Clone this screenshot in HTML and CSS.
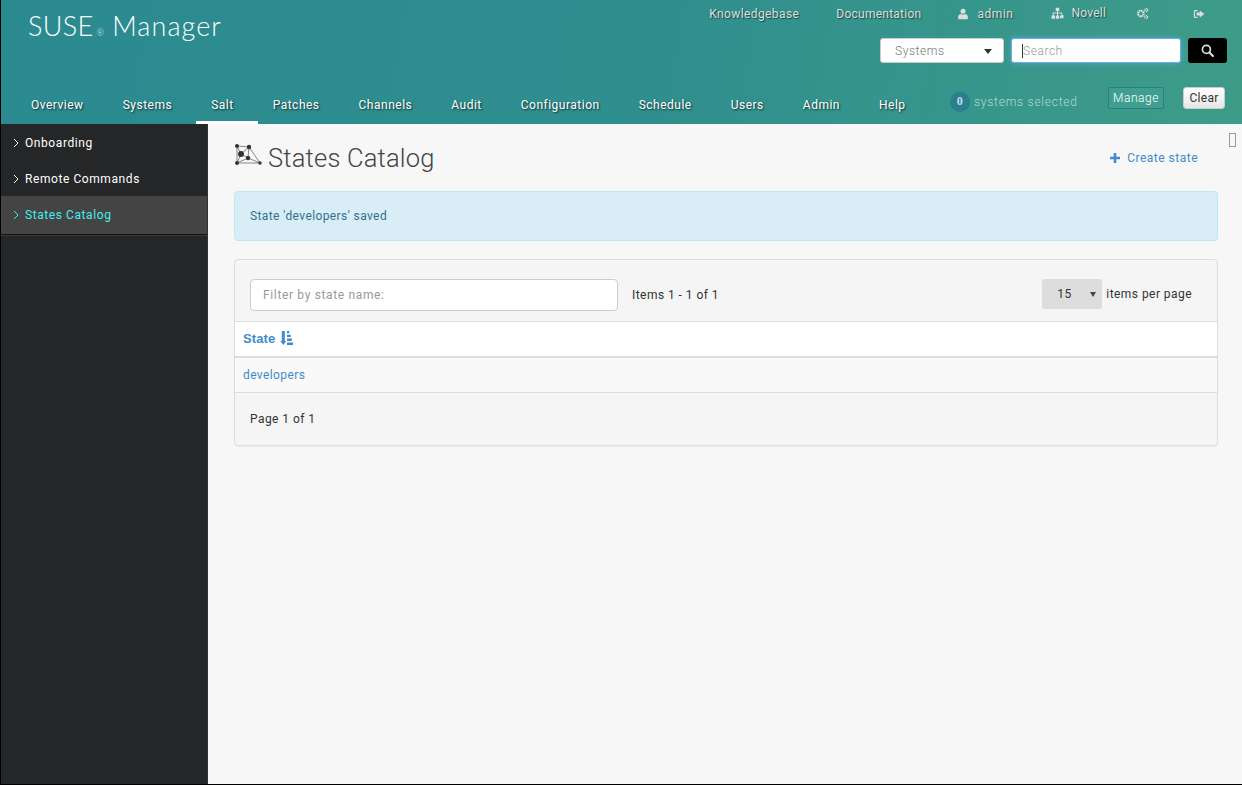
FILE: index.html
```html
<!DOCTYPE html>
<html lang="en">
<head>
<meta charset="utf-8">
<title>States Catalog - SUSE Manager</title>
<link rel="stylesheet" href="styles.css">
</head>
<body>
<div class="app">
  <header class="header">
    <div class="header-top">
      <div class="brand">SUSE<span class="reg">®</span><span class="brand-name">Manager</span></div>
      <div class="tools">
        <ul class="util">
          <li class="u-kb">Knowledgebase</li>
          <li class="u-doc">Documentation</li>
          <li class="u-admin"><svg class="ico" viewBox="0 0 12 12"><circle cx="6" cy="3.2" r="2.5"/><path d="M1.2 11.2V8.6C1.2 7 2.8 6.3 4 6.1c1.2.8 2.8.8 4 0 1.200.2 2.800.9 2.800 2.500v2.600z"/></svg>admin</li>
          <li class="u-org"><svg class="ico ico-org" viewBox="0 0 13 12"><path d="M4.700 0.800h3.600v3.200H7v1.500h4.200v2.500h1.300v3.200H9V8.500h1.300V6.500H7v2h1.200v3.200H4.800V8.500H6v-2H2.700v2H4v3.200H.5V8.500h1.200V5.500H6V4H4.700z"/></svg>Novell</li>
          <li class="u-cog"><svg class="ico ico-cog" viewBox="0 0 14 14"><circle cx="5.200" cy="7" r="3" fill="none" stroke-width="2.400" stroke-dasharray="1.700 .6"/><circle cx="11" cy="3.200" r="1.500" fill="none" stroke-width="1.500" stroke-dasharray="1 .5"/><circle cx="11" cy="10.800" r="1.500" fill="none" stroke-width="1.500" stroke-dasharray="1 .5"/></svg></li>
          <li class="u-out"><svg class="ico" viewBox="0 0 12 12"><path d="M4.500 2H2.200C1.300 2 .8 2.600.8 3.400v5.200c0 .8.5 1.400 1.400 1.400h2.300V8.800H2.400c-.2 0-.4-.2-.4-.4V3.600c0-.2.2-.4.400-.4h2.100z"/><path d="M6.800 2.400 11.400 6 6.800 9.600V7.600H3.600V4.400h3.200z"/></svg></li>
        </ul>
        <div class="search">
          <div class="select"><span>Systems</span><i class="caret"></i></div>
          <div class="search-input"><i class="cursor"></i><span>Search</span></div>
          <div class="search-btn"><svg viewBox="0 0 12 12"><circle cx="5" cy="5" r="3.700" fill="none" stroke="#ddd" stroke-width="1.600"/><path d="M7.800 7.800 11 11" stroke="#ddd" stroke-width="2" stroke-linecap="round"/></svg></div>
        </div>
      </div>
    </div>
    <div class="header-bottom">
      <nav>
        <ul class="mainnav">
          <li>Overview</li>
          <li>Systems</li>
          <li class="active">Salt</li>
          <li>Patches</li>
          <li>Channels</li>
          <li>Audit</li>
          <li>Configuration</li>
          <li>Schedule</li>
          <li>Users</li>
          <li>Admin</li>
          <li>Help</li>
        </ul>
      </nav>
      <div class="ssm">
        <span class="badge">0</span>
        <span class="ssm-text">systems selected</span>
        <span class="btn-manage">Manage</span>
        <span class="btn-clear">Clear</span>
      </div>
    </div>
  </header>
  <div class="body">
    <aside class="sidebar">
      <ul class="sidenav">
        <li><svg class="chev" viewBox="0 0 6 10"><path d="M1 1l4 4-4 4"/></svg>Onboarding</li>
        <li><svg class="chev" viewBox="0 0 6 10"><path d="M1 1l4 4-4 4"/></svg>Remote Commands</li>
        <li class="current"><svg class="chev" viewBox="0 0 6 10"><path d="M1 1l4 4-4 4"/></svg>States Catalog</li>
      </ul>
    </aside>
    <main class="main">
      <i class="missing-glyph"></i>
      <div class="page-head">
        <h1><svg class="net" viewBox="0 0 28 24">
          <path d="M3 3 L15 4 L26 20 L3 20 Z M3 3 L7 11 L3 20 M7 11 L15 4 M7 11 L14 15 L26 20 M15 4 L14 15 M14 15 L3 20" fill="none" stroke="#555" stroke-width=".7"/>
          <circle cx="3" cy="3" r="2"/><circle cx="15" cy="4" r="2.200"/><circle cx="7" cy="11" r="3"/><circle cx="14" cy="15" r="2.200"/><circle cx="3" cy="20" r="2"/><circle cx="26" cy="20" r="1.700"/>
        </svg>States Catalog</h1>
        <a class="create"><svg viewBox="0 0 10 10"><path d="M3.700 0h2.600v3.700H10v2.600H6.300V10H3.700V6.300H0V3.700h3.700z"/></svg>Create state</a>
      </div>
      <div class="alert">State 'developers' saved</div>
      <section class="panel">
        <div class="panel-top">
          <div class="filter">Filter by state name:</div>
          <div class="items">Items 1 - 1 of 1</div>
          <div class="perpage">
            <div class="pp-select"><span>15</span><i></i></div>
            <span>items per page</span>
          </div>
        </div>
        <div class="th"><span>State</span><svg viewBox="0 0 13 14"><path d="M1.800 0h3v10h1.500L3.300 14 .3 10h1.500z"/><path d="M7 0h2.200v2.300H7zM7 3.800h3.700v2.300H7zM7 7.600h4.800v2.400H7zM7 11.500h6V14H7z"/></svg></div>
        <div class="td">developers</div>
        <div class="panel-foot">Page 1 of 1</div>
      </section>
    </main>
  </div>
</div>
</body>
</html>
```

FILE: styles.css
```css
* { box-sizing: border-box; }
html, body { margin: 0; height: 100%; }
body {
  font-family: Roboto, "Liberation Sans", sans-serif;
  font-size: 12px;
  font-weight: 300;
  letter-spacing: .55px;
  color: #333;
  background: #000;
  overflow: hidden;
}
ul { list-style: none; margin: 0; padding: 0; }
.app {
  height: 784px;
  margin-left: 1px;
  display: flex;
  flex-direction: column;
}
.header {
  height: 124px;
  flex: none;
  background: linear-gradient(100deg, #2b8a90 0%, #2f8e8e 50%, #3d9c88 100%);
  display: flex;
  flex-direction: column;
  color: #fff;
}
.header-top {
  display: flex;
  justify-content: space-between;
  height: 88px;
}
.brand {
  font-family: Lato, sans-serif;
  font-weight: 300;
  font-size: 27px;
  letter-spacing: .3px;
  padding: 9px 0 0 27px;
  line-height: 34px;
}
.reg { font-size: 9px; margin: 0 8px 0 3px; opacity: .8; }
.brand-name { font-size: 27px; letter-spacing: 1.050px; }
.tools { display: flex; flex-direction: column; align-items: flex-end; }
.util {
  display: flex;
  height: 38px;
  padding-top: 7px;
  line-height: 14px;
  color: #ddd;
  font-weight: 400;
  text-shadow: 1px 1px 1px rgba(0,0,0,.5);
}
.u-kb { margin-right: 37px; letter-spacing: .4px; }
.u-doc { margin-right: 36px; letter-spacing: .25px; }
.u-admin { margin-right: 37px; }
.u-org { margin-right: 30px; margin-top: -1px; letter-spacing: .2px; }
.u-cog { margin-right: 44px; }
.u-out { margin-right: 37px; }
.ico { width: 12px; height: 12px; fill: #ddd; vertical-align: -2px; margin-right: 8px; }
.ico-org { width: 13px; margin-right: 8px; }
.ico-cog { width: 13px; height: 13px; margin: 0; fill: none; stroke: #ddd; }
.u-out .ico { margin: 0; }
.search { display: flex; padding-right: 15px; height: 26px; }
.select {
  width: 124px; height: 25px;
  background: #fff;
  border: 1px solid #ccc;
  border-radius: 3px;
  display: flex; align-items: center; justify-content: space-between;
  padding: 0 11px 0 14px;
  color: #777;
  margin-right: 7px;
}
.caret { width: 0; height: 0; border: 4.500px solid transparent; border-top: 5px solid #333; border-bottom: 0; margin-top: 1px; }
.search-input {
  width: 170px; height: 25px;
  background: #fff;
  border: 1px solid #66afe9;
  border-radius: 3px;
  box-shadow: 0 0 6px rgba(102,175,233,.6);
  display: flex; align-items: center;
  padding-left: 10px;
  color: #999;
  margin-right: 7px;
}
.cursor { width: 1px; height: 14px; background: #333; }
.search-btn {
  width: 39px; height: 25px;
  background: #000;
  border-radius: 3px;
  display: flex; align-items: center; justify-content: center;
}
.search-btn svg { width: 13px; height: 13px; }
.header-bottom { display: flex; flex: 1; }
.mainnav { display: flex; padding-left: 15px; height: 36px; }
.mainnav li {
  padding: 9px 24px 0 15px;
  line-height: 16px;
  color: #fff;
  text-shadow: 1px 1px 2px rgba(0,0,0,.7);
  letter-spacing: .5px;
  font-weight: 400;
}
.mainnav li.active { border-bottom: 3px solid #fff; height: 36px; }
.ssm { display: flex; align-items: flex-start; position: absolute; left: 950px; }
.badge {
  width: 20px; height: 20px;
  margin-top: 4px;
  border-radius: 50%;
  background: #2a7f8a;
  color: #cde;
  font-weight: 700;
  text-align: center;
  line-height: 18px;
  font-family: "Liberation Serif", serif;
  margin-right: 4px;
}
.ssm-text { width: 134px; color: #b5d8d4; margin-top: 7px; line-height: 14px; letter-spacing: .75px; }
.btn-manage {
  margin-top: -1px;
  width: 56px; height: 22px;
  border: 1px solid #2a7d80;
  border-radius: 2px;
  background: #3f9f8f;
  color: #fff;
  text-align: center;
  line-height: 20px;
  margin-right: 19px;
}
.btn-clear {
  margin-top: -1px;
  width: 42px; height: 22px;
  border: 1px solid #ccc;
  border-radius: 3px;
  background: linear-gradient(#fff, #e6e6e6);
  color: #333;
  text-align: center;
  line-height: 20px;
  letter-spacing: .3px;
  font-weight: 400;
}
.body { flex: 1; display: flex; min-height: 0; background: #f7f7f7; }
.sidebar {
  width: 207px;
  flex: none;
  background: #252628;
  border-right: 1px solid #333;
}
.sidenav li {
  height: 36px;
  padding: 2px 0 0 12px;
  display: flex; align-items: center;
  color: #fff;
  letter-spacing: .58px;
  font-weight: 400;
}
.sidenav li.current {
  height: 39px;
  padding-bottom: 3px;
  background: #444;
  color: #44eeee;
  border-bottom: 1px solid #111;
  box-shadow: 0 1px 0 #3a3a3a;
}
.chev { width: 6px; height: 10px; margin-right: 6px; fill: none; stroke: currentColor; stroke-width: 1; }
.main { flex: 1; position: relative; padding: 0 24px 0 26px; }
.missing-glyph {
  position: absolute; right: 6px; top: 9px;
  width: 7px; height: 14px;
  border: 1px solid #999;
}
.page-head {
  display: flex; justify-content: space-between; align-items: center;
  height: 67px;
}
h1 {
  margin: 0;
  font-weight: 300;
  font-size: 25.500px;
  letter-spacing: .2px;
  color: #444;
  display: flex; align-items: center;
  height: 63px;
}
.net { width: 28px; height: 24px; margin-right: 6px; fill: #333; margin-top: -6px; }
.create { color: #428bca; padding-right: 20px; display: flex; align-items: center; letter-spacing: .5px; margin-top: 1px; font-weight: 400; }
.create svg { width: 10px; height: 10px; fill: #428bca; margin-right: 7px; }
.alert {
  height: 50px;
  background: #d9edf7;
  border: 1px solid #bce8f1;
  border-radius: 4px;
  color: #31708f;
  padding-left: 15px;
  line-height: 48px;
  margin-bottom: 18px;
  font-weight: 400;
  letter-spacing: .4px;
}
.panel {
  background: #f5f5f5;
  border: 1px solid #ddd;
  border-radius: 4px;
  box-shadow: 0 1px 1px rgba(0,0,0,.05);
  height: 187px;
  display: flex; flex-direction: column;
}
.panel-top {
  display: flex; align-items: flex-start;
  height: 61px;
  padding: 19px 25px 0 15px;
}
.filter {
  width: 368px; height: 32px;
  background: #fff;
  border: 1px solid #ccc;
  border-radius: 4px;
  padding-left: 12px;
  line-height: 30px;
  color: #999;
  font-weight: 400;
  letter-spacing: .65px;
  margin-right: 14px;
}
.items { flex: 1; line-height: 32px; font-weight: 400; letter-spacing: .45px; }
.perpage { display: flex; align-items: center; font-weight: 400; letter-spacing: .45px; }
.pp-select {
  width: 60px; height: 30px;
  background: #ddd;
  border-radius: 3px;
  display: flex; align-items: center; justify-content: space-between;
  padding: 0 6px 0 15px;
  margin-right: 4px;
}
.pp-select i { width: 0; height: 0; border: 3.500px solid transparent; border-top: 5px solid #444; border-bottom: 0; }
.th {
  height: 37px;
  background: #fff;
  border-top: 1px solid #ddd;
  border-bottom: 2px solid #ddd;
  padding: 0 0 2px 8px;
  display: flex; align-items: center;
  color: #428bca;
  font-weight: 700;
  font-size: 13px;
  letter-spacing: .1px;
  font-family: "Liberation Sans", sans-serif;
}
.th svg { width: 13px; height: 14px; margin-left: 5px; fill: #428bca; }
.td {
  height: 35px;
  background: #f9f9f9;
  border-bottom: 1px solid #ddd;
  padding-left: 8px;
  line-height: 34px;
  color: #428bca;
  font-weight: 400;
  letter-spacing: .4px;
}
.panel-foot { flex: 1; padding: 19px 15px 0; line-height: 14px; font-weight: 400; letter-spacing: .45px; }
```
